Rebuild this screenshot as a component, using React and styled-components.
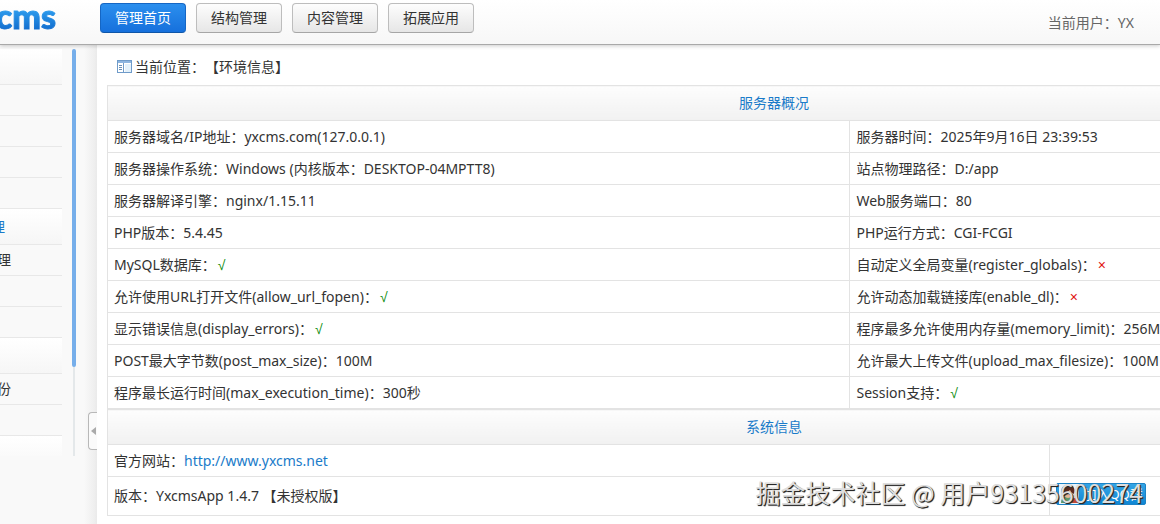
import styled, { createGlobalStyle, ThemeProvider } from 'styled-components';

const theme = {
  fonts: {
    body: "'Noto Sans', 'Noto Sans CJK SC', sans-serif",
    logo: "Lato, 'Noto Sans', sans-serif",
    flag: "'Liberation Sans', sans-serif",
    mark: "'Noto Sans CJK SC', sans-serif",
  },
  colors: {
    text: '#333',
    muted: '#666',
    link: '#1a7bc9',
    line: '#e3e3e3',
    side: '#f9f9f9',
    on: '#0a8a0a',
    off: '#e01010',
  },
};

const GlobalStyle = createGlobalStyle`
  * {
    box-sizing: border-box;
  }

  body {
    margin: 0;
    overflow: hidden;
    font-family: ${theme.fonts.body};
    font-size: 14px;
    line-height: 20px;
    text-spacing-trim: space-all;
    color: ${theme.colors.text};
    background: ${theme.colors.side};
  }
`;

const Page = styled.div`
  position: relative;
  display: flex;
  flex-direction: column;
  min-height: 100vh;
`;

const Header = styled.header`
  position: relative;
  z-index: 1;
  display: flex;
  align-items: flex-start;
  height: 45px;
  background: linear-gradient(#fff, #f7f7f7);
  border-bottom: 1px solid #a9a9a9;
  box-shadow: 0 1px 4px rgba(0, 0, 0, 0.2);
`;

const Logo = styled.a`
  display: flex;
  justify-content: flex-end;
  width: 56px;
  margin-right: 44px;
  font-family: ${p => p.theme.fonts.logo};
  font-size: 34px;
  font-weight: 900;
  line-height: 32px;
  text-decoration: none;
  color: transparent;
  background: linear-gradient(#2fa0f0 25%, #1470d0 90%);
  background-clip: text;
  -webkit-text-stroke: 1px transparent;
`;

const Nav = styled.nav`
  display: flex;
  gap: 10px;
  padding-top: 3px;
`;

const NavButton = styled.button`
  width: 86px;
  height: 30px;
  padding: 0;
  font: inherit;
  color: ${p => (p.$active ? '#fff' : p.theme.colors.text)};
  background: ${p =>
    p.$active
      ? 'linear-gradient(#2b8fee, #1670dc)'
      : 'linear-gradient(#fdfdfd, #e6e6e6)'};
  border: 1px solid ${p => (p.$active ? '#1566c4' : '#bdbdbd')};
  border-bottom-color: ${p => (p.$active ? '#0f56a8' : '#a6a6a6')};
  border-radius: 4px;
`;

const CurrentUser = styled.p`
  margin: 0 26px 0 auto;
  padding-top: 13px;
  color: ${p => p.theme.colors.muted};
`;

const Body = styled.div`
  display: flex;
  flex: 1;
`;

const Sidebar = styled.aside`
  position: relative;
  display: flex;
  flex: 0 0 97px;
  align-items: flex-start;
  gap: 10px;
  padding-top: 4px;
  overflow: hidden;
  background: linear-gradient(90deg, transparent 84px, #ececec);
`;

const Menu = styled.ul`
  flex: 0 0 62px;
  height: 407px;
  margin: 0;
  padding: 0;
  overflow: hidden;
  list-style: none;
`;

const MenuTitle = styled.li`
  display: flex;
  justify-content: flex-end;
  align-items: center;
  height: 36px;
  padding-right: 57px;
  color: ${p => p.theme.colors.link};
  background: linear-gradient(#fff, #f6f6f6);
  border-bottom: 1px solid #e8e8e8;
`;

const MenuItem = styled.li`
  display: flex;
  justify-content: flex-end;
  align-items: center;
  height: 31px;
  padding-right: 51px;
  border-bottom: 1px solid #e8e8e8;
`;

const ScrollTrack = styled.div`
  display: flex;
  justify-content: center;
  width: 4px;
  height: 407px;
  background: linear-gradient(#e4e8ea, #e4e8ea) center / 2px 100% no-repeat;
`;

const ScrollThumb = styled.div`
  width: 4px;
  height: 318px;
  background: #76aeea;
  border-radius: 2px;
`;

const Toggle = styled.button`
  position: absolute;
  top: 367px;
  right: 0;
  display: flex;
  justify-content: center;
  align-items: center;
  width: 9px;
  height: 38px;
  padding: 0;
  background: #fafafa;
  border: 1px solid #b8b8b8;
  border-right: 0;
  border-radius: 4px 0 0 4px;
`;

const Main = styled.main`
  flex: 1;
  min-width: 0;
  padding: 12px 0 8px 10px;
  overflow: hidden;
  background: #fff;
  box-shadow: 0 0 2px rgba(0, 0, 0, 0.5);
`;

const Location = styled.div`
  display: flex;
  align-items: center;
  gap: 3px;
  height: 20px;
  margin: 0 0 8px 10px;
`;

const InfoTable = styled.table`
  width: 100%;
  min-width: 1334px;
  table-layout: fixed;
  border-collapse: collapse;
`;

const FirstCol = styled.col`
  width: ${p => p.$width};
`;

const TableTitle = styled.th`
  height: 35px;
  padding: 0;
  font-weight: 400;
  color: ${p => p.theme.colors.link};
  background: linear-gradient(#fdfdfd, #f1f1f1);
  border: 1px solid ${p => p.theme.colors.line};
`;

const Cell = styled.td`
  height: ${p => (p.$tall ? 39 : 32)}px;
  padding: 0 6px;
  white-space: nowrap;
  border: 1px solid ${p => p.theme.colors.line};
`;

const Flag = styled.span`
  margin-left: 2px;
  font-family: ${p => p.theme.fonts.flag};
  color: ${p => (p.$on ? p.theme.colors.on : p.theme.colors.off)};
`;

const SiteLink = styled.a`
  color: ${p => p.theme.colors.link};
  text-decoration: none;
`;

const GroupLink = styled.a`
  display: flex;
  align-items: center;
  gap: 4px;
  width: 90px;
  height: 22px;
  margin-bottom: 4px;
  padding-left: 2px;
  font-size: 13px;
  color: #fff;
  text-decoration: none;
  white-space: nowrap;
  background: linear-gradient(#35a5e6, #0f86d4);
  border: 1px solid #1c83c6;
  border-radius: 2px;
`;

const Watermark = styled.div`
  position: absolute;
  right: 17px;
  bottom: 14px;
  font-family: ${p => p.theme.fonts.mark};
  font-size: 25px;
  line-height: 36px;
  white-space: nowrap;
  color: #dedede;
  text-shadow: 1px 1px 1px #222, 1px 1px 0 #555;
  pointer-events: none;
`;

const navItems = ['管理首页', '结构管理', '内容管理', '拓展应用'];

const menu = [
  { title: '', items: ['', '', '', ''] },
  { title: '理', items: ['理', '', ''] },
  { title: '', items: ['份', ''] },
  { title: '', items: [] },
];

const serverRows = [
  [
    { label: '服务器域名/IP地址', value: 'yxcms.com(127.0.0.1)' },
    { label: '服务器时间', value: '2025年9月16日 23:39:53' },
  ],
  [
    {
      label: '服务器操作系统',
      value: 'Windows (内核版本：DESKTOP-04MPTT8)',
    },
    { label: '站点物理路径', value: 'D:/app' },
  ],
  [
    { label: '服务器解译引擎', value: 'nginx/1.15.11' },
    { label: 'Web服务端口', value: '80' },
  ],
  [
    { label: 'PHP版本', value: '5.4.45' },
    { label: 'PHP运行方式', value: 'CGI-FCGI' },
  ],
  [
    { label: 'MySQL数据库', value: true },
    { label: '自动定义全局变量(register_globals)', value: false },
  ],
  [
    { label: '允许使用URL打开文件(allow_url_fopen)', value: true },
    { label: '允许动态加载链接库(enable_dl)', value: false },
  ],
  [
    { label: '显示错误信息(display_errors)', value: true },
    { label: '程序最多允许使用内存量(memory_limit)', value: '256M' },
  ],
  [
    { label: 'POST最大字节数(post_max_size)', value: '100M' },
    { label: '允许最大上传文件(upload_max_filesize)', value: '100M' },
  ],
  [
    { label: '程序最长运行时间(max_execution_time)', value: '300秒' },
    { label: 'Session支持', value: true },
  ],
];

const PanelIcon = () => (
  <svg width="15" height="14" viewBox="0 0 15 14" aria-hidden="true">
    <rect x="0.5" y="0.5" width="14" height="12" fill="#fff" stroke="#6f9bc9" />
    <rect x="1" y="1" width="13" height="2" fill="#8db5e0" />
    <path d="M6.5 3v9.500" stroke="#6f9bc9" />
    <rect x="8" y="4" width="6" height="8" fill="#e3f1fb" />
    <path d="M2 5.500h3M2 7.500h3M2 9.500h3" stroke="#6b8fb5" />
  </svg>
);

const GroupIcon = () => (
  <svg width="20" height="20" viewBox="0 0 20 20" aria-hidden="true">
    <rect width="20" height="20" fill="#e9f3fa" />
    <path d="M2 19c0-5 3-7 7-7s7 3 7 7z" fill="#5f9a6c" />
    <circle cx="9" cy="9" r="5" fill="#e8b794" />
    <path d="M3 10c-2-7 2-9 6-9s8 2 6 9c-2-1-3-2-4-4-2 2-5 3-8 4z" fill="#5c2a1e" />
    <circle cx="16" cy="12" r="2" fill="#f3d2b6" />
    <path d="M12 19c0-3 2-5 4-5s4 2 4 5z" fill="#c24a38" />
  </svg>
);

const InfoCell = ({ label, value }) => (
  <Cell>
    {label}：
    {typeof value === 'boolean' ? (
      <Flag $on={value}>{value ? '√' : '×'}</Flag>
    ) : (
      value
    )}
  </Cell>
);

export default function App() {
  return (
    <ThemeProvider theme={theme}>
      <GlobalStyle />
      <Page>
        <Header>
          <Logo href="#">cms</Logo>
          <Nav>
            {navItems.map((name, i) => (
              <NavButton key={name} type="button" $active={i === 0}>
                {name}
              </NavButton>
            ))}
          </Nav>
          <CurrentUser>当前用户：YX</CurrentUser>
        </Header>

        <Body>
          <Sidebar>
            <Menu>
              {menu.map((group, i) => [
                <MenuTitle key={`title-${i}`}>{group.title}</MenuTitle>,
                ...group.items.map((item, j) => (
                  <MenuItem key={`item-${i}-${j}`}>{item}</MenuItem>
                )),
              ])}
            </Menu>
            <ScrollTrack>
              <ScrollThumb />
            </ScrollTrack>
            <Toggle type="button" aria-label="收起">
              <svg width="5" height="8" viewBox="0 0 5 8" aria-hidden="true">
                <path d="M5 0v8L0 4z" fill="#aaa" />
              </svg>
            </Toggle>
          </Sidebar>

          <Main>
            <Location>
              <PanelIcon />
              <span>当前位置：【环境信息】</span>
            </Location>

            <InfoTable>
              <colgroup>
                <FirstCol $width="55.7%" />
                <col />
              </colgroup>
              <thead>
                <tr>
                  <TableTitle colSpan={2}>服务器概况</TableTitle>
                </tr>
              </thead>
              <tbody>
                {serverRows.map(([left, right]) => (
                  <tr key={left.label}>
                    <InfoCell {...left} />
                    <InfoCell {...right} />
                  </tr>
                ))}
              </tbody>
            </InfoTable>

            <InfoTable>
              <colgroup>
                <FirstCol $width="70.7%" />
                <col />
              </colgroup>
              <thead>
                <tr>
                  <TableTitle colSpan={2}>系统信息</TableTitle>
                </tr>
              </thead>
              <tbody>
                <tr>
                  <Cell>
                    官方网站：
                    <SiteLink href="http://www.yxcms.net">
                      http://www.yxcms.net
                    </SiteLink>
                  </Cell>
                  <Cell />
                </tr>
                <tr>
                  <Cell $tall>版本：YxcmsApp 1.4.7 【未授权版】</Cell>
                  <Cell $tall>
                    <GroupLink href="#">
                      <GroupIcon />
                      加入QQ群
                    </GroupLink>
                  </Cell>
                </tr>
              </tbody>
            </InfoTable>
          </Main>
        </Body>

        <Watermark>掘金技术社区 @ 用户93135600274</Watermark>
      </Page>
    </ThemeProvider>
  );
}
